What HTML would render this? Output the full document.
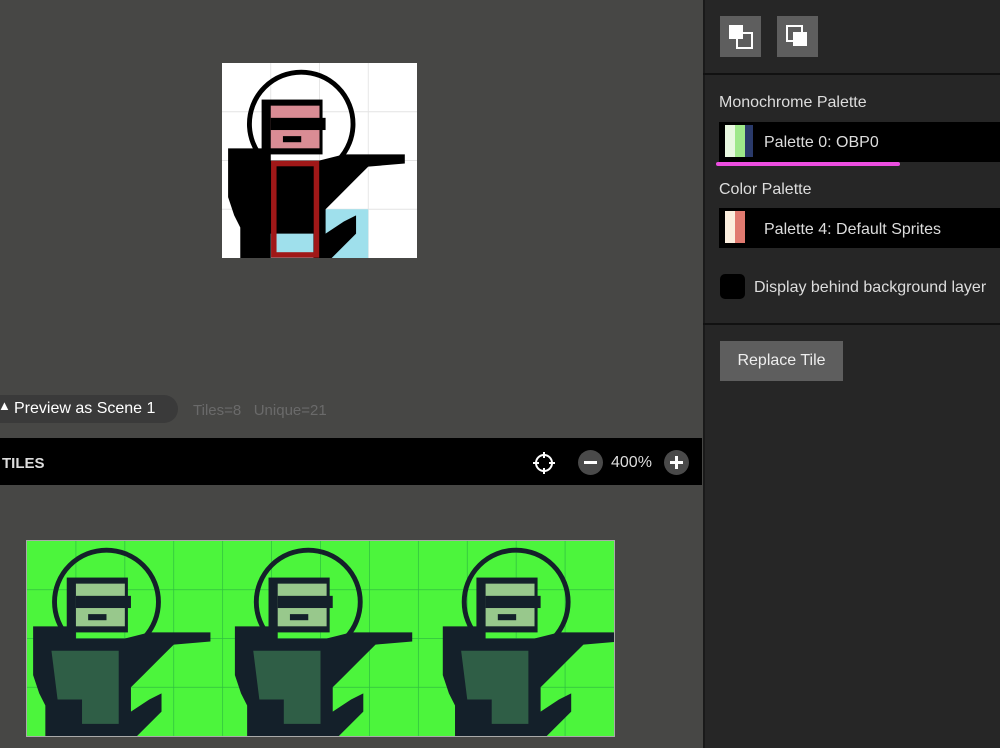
<!DOCTYPE html>
<html><head><style>
body{margin:0;width:1000px;height:748px;overflow:hidden;background:#474745;font-family:"Liberation Sans",sans-serif;position:relative}
.abs{position:absolute}
.panel{left:703px;top:0;width:297px;height:748px;background:#262626;border-left:2px solid #1a1a1a}
.lbl{color:#ddd;font-size:16px}
.sel{background:#000;height:40px;left:719px;width:281px;color:#ddd;font-size:16px}
</style></head><body>
<svg width="0" height="0" style="position:absolute">
<defs>
<symbol id="spr" viewBox="0 0 32 32">
<circle cx="13" cy="10" r="8.5" fill="none" stroke="var(--k)" stroke-width="0.8"/>
<rect x="6.5" y="6" width="10" height="9" fill="var(--k)"/>
<rect x="8" y="7" width="8" height="7" fill="var(--f)"/>
<rect x="8" y="9" width="9" height="2" fill="var(--k)"/>
<rect x="10" y="12" width="3" height="1" fill="var(--k)"/>
<polygon points="1,14 8,14 8,16 16,16 20,15 26,15 30,15 30,16.5 24,17 22,19 19,22 17,24 17,28 20,26 22,25 22,28 18,32 3,32 3,27 2,25 1,22" fill="var(--k)"/>
<polygon points="4,18 15,18 15,30 9,30 9,26 5,26" fill="var(--b)"/>
</symbol>
</defs>
</svg>

<div class="abs" style="left:222px;top:63px;width:195px;height:195px;background:#fff">
<svg width="195" height="195" viewBox="0 0 32 32" style="--k:#000;--f:#d98c94;--b:#000">
<g stroke="#e4e4e4" stroke-width="0.15"><line x1="8" y1="0" x2="8" y2="32"/><line x1="16" y1="0" x2="16" y2="32"/><line x1="24" y1="0" x2="24" y2="32"/><line y1="8" x1="0" y2="8" x2="32"/><line y1="16" x1="0" y2="16" x2="32"/><line y1="24" x1="0" y2="24" x2="32"/></g>
<rect x="16" y="24" width="8" height="8" fill="#9fe0ec"/>
<use href="#spr" width="32" height="32"/>
<rect x="8" y="28" width="7" height="4" fill="#9fe0ec"/>
<rect x="8.5" y="16.5" width="7" height="15" fill="none" stroke="#a01818" stroke-width="0.9"/>
</svg>
</div>

<div class="abs" style="left:-20px;top:395px;width:198px;height:28px;border-radius:14px;background:#3a3a3a;color:#fff;font-size:16px;line-height:28px;text-indent:34px">Preview as Scene 1</div>
<div class="abs" style="left:-2px;top:398px;color:#fff;font-size:13px">▲</div>
<div class="abs" style="left:193px;top:402px;color:#6a6a6a;font-size:15px">Tiles=8&nbsp;&nbsp;&nbsp;Unique=21</div>

<div class="abs" style="left:0;top:438px;width:702px;height:47px;background:#000"></div>
<div class="abs" style="left:2px;top:455px;color:#ddd;font-size:15px;font-weight:bold">TILES</div>
<svg class="abs" style="left:532px;top:451px" width="24" height="24" viewBox="0 0 24 24" fill="none" stroke="#fff" stroke-width="2"><circle cx="12" cy="12" r="8"/><line x1="12" y1="1" x2="12" y2="7"/><line x1="12" y1="17" x2="12" y2="23"/><line x1="1" y1="12" x2="7" y2="12"/><line x1="17" y1="12" x2="23" y2="12"/></svg>
<div class="abs" style="left:578px;top:450px;width:25px;height:25px;border-radius:50%;background:#4a4a4a"><div class="abs" style="left:6px;top:11px;width:13px;height:3px;background:#fff"></div></div>
<div class="abs" style="left:611px;top:454px;color:#ddd;font-size:16px">400%</div>
<div class="abs" style="left:664px;top:450px;width:25px;height:25px;border-radius:50%;background:#4a4a4a"><div class="abs" style="left:6px;top:11px;width:13px;height:3px;background:#fff"></div><div class="abs" style="left:11px;top:6px;width:3px;height:13px;background:#fff"></div></div>

<div class="abs" style="left:26px;top:540px;width:587px;height:195px;background:#4cf53c;border:1px solid #aaa">
<svg width="587" height="195" viewBox="0 0 96 32" preserveAspectRatio="none" style="--k:#14202a;--f:#98c88c;--b:#2f5e46">
<g stroke="#2fc040" stroke-width="0.12">
<line x1="8" y1="0" x2="8" y2="32"/><line x1="16" y1="0" x2="16" y2="32"/><line x1="24" y1="0" x2="24" y2="32"/><line x1="32" y1="0" x2="32" y2="32"/><line x1="40" y1="0" x2="40" y2="32"/><line x1="48" y1="0" x2="48" y2="32"/><line x1="56" y1="0" x2="56" y2="32"/><line x1="64" y1="0" x2="64" y2="32"/><line x1="72" y1="0" x2="72" y2="32"/><line x1="80" y1="0" x2="80" y2="32"/><line x1="88" y1="0" x2="88" y2="32"/>
<line x1="0" y1="8" x2="96" y2="8"/><line x1="0" y1="16" x2="96" y2="16"/><line x1="0" y1="24" x2="96" y2="24"/></g>
<use href="#spr" x="0" width="32" height="32"/>
<use href="#spr" x="33" width="32" height="32"/>
<use href="#spr" x="67" width="32" height="32"/>
</svg>
</div>

<div class="abs panel"></div>
<div class="abs" style="left:720px;top:16px;width:41px;height:41px;background:#5e5e5e"><div class="abs" style="left:9px;top:9px;width:14px;height:14px;background:#fff"></div><div class="abs" style="left:16px;top:16px;width:13px;height:13px;border:2px solid #fff"></div></div>
<div class="abs" style="left:777px;top:16px;width:41px;height:41px;background:#5e5e5e"><div class="abs" style="left:9px;top:9px;width:13px;height:13px;border:2px solid #fff"></div><div class="abs" style="left:16px;top:16px;width:14px;height:14px;background:#fff"></div></div>
<div class="abs" style="left:703px;top:73px;width:297px;height:2px;background:#111"></div>
<div class="abs lbl" style="left:719px;top:94px">Monochrome Palette</div>
<div class="abs sel" style="top:122px"><div class="abs" style="left:6px;top:3px;width:10px;height:32px;background:#e8f8e0"></div><div class="abs" style="left:16px;top:3px;width:10px;height:32px;background:#9ee88a"></div><div class="abs" style="left:26px;top:3px;width:8px;height:32px;background:#2a3a6a"></div><div class="abs" style="left:45px;top:12px">Palette 0: OBP0</div></div>
<div class="abs" style="left:716px;top:162px;width:184px;height:4px;border-radius:2px;background:#ec4ee0"></div>
<div class="abs lbl" style="left:719px;top:181px">Color Palette</div>
<div class="abs sel" style="top:208px"><div class="abs" style="left:6px;top:3px;width:10px;height:32px;background:#fbeede"></div><div class="abs" style="left:16px;top:3px;width:10px;height:32px;background:#e07a70"></div><div class="abs" style="left:45px;top:13px">Palette 4: Default Sprites</div></div>
<div class="abs" style="left:720px;top:274px;width:25px;height:25px;border-radius:5px;background:#000"></div>
<div class="abs lbl" style="left:754px;top:279px">Display behind background layer</div>
<div class="abs" style="left:703px;top:323px;width:297px;height:2px;background:#111"></div>
<div class="abs" style="left:720px;top:341px;width:123px;height:40px;background:#5e5e5e;color:#eee;font-size:16px;line-height:40px;text-align:center">Replace Tile</div>
</body></html>
